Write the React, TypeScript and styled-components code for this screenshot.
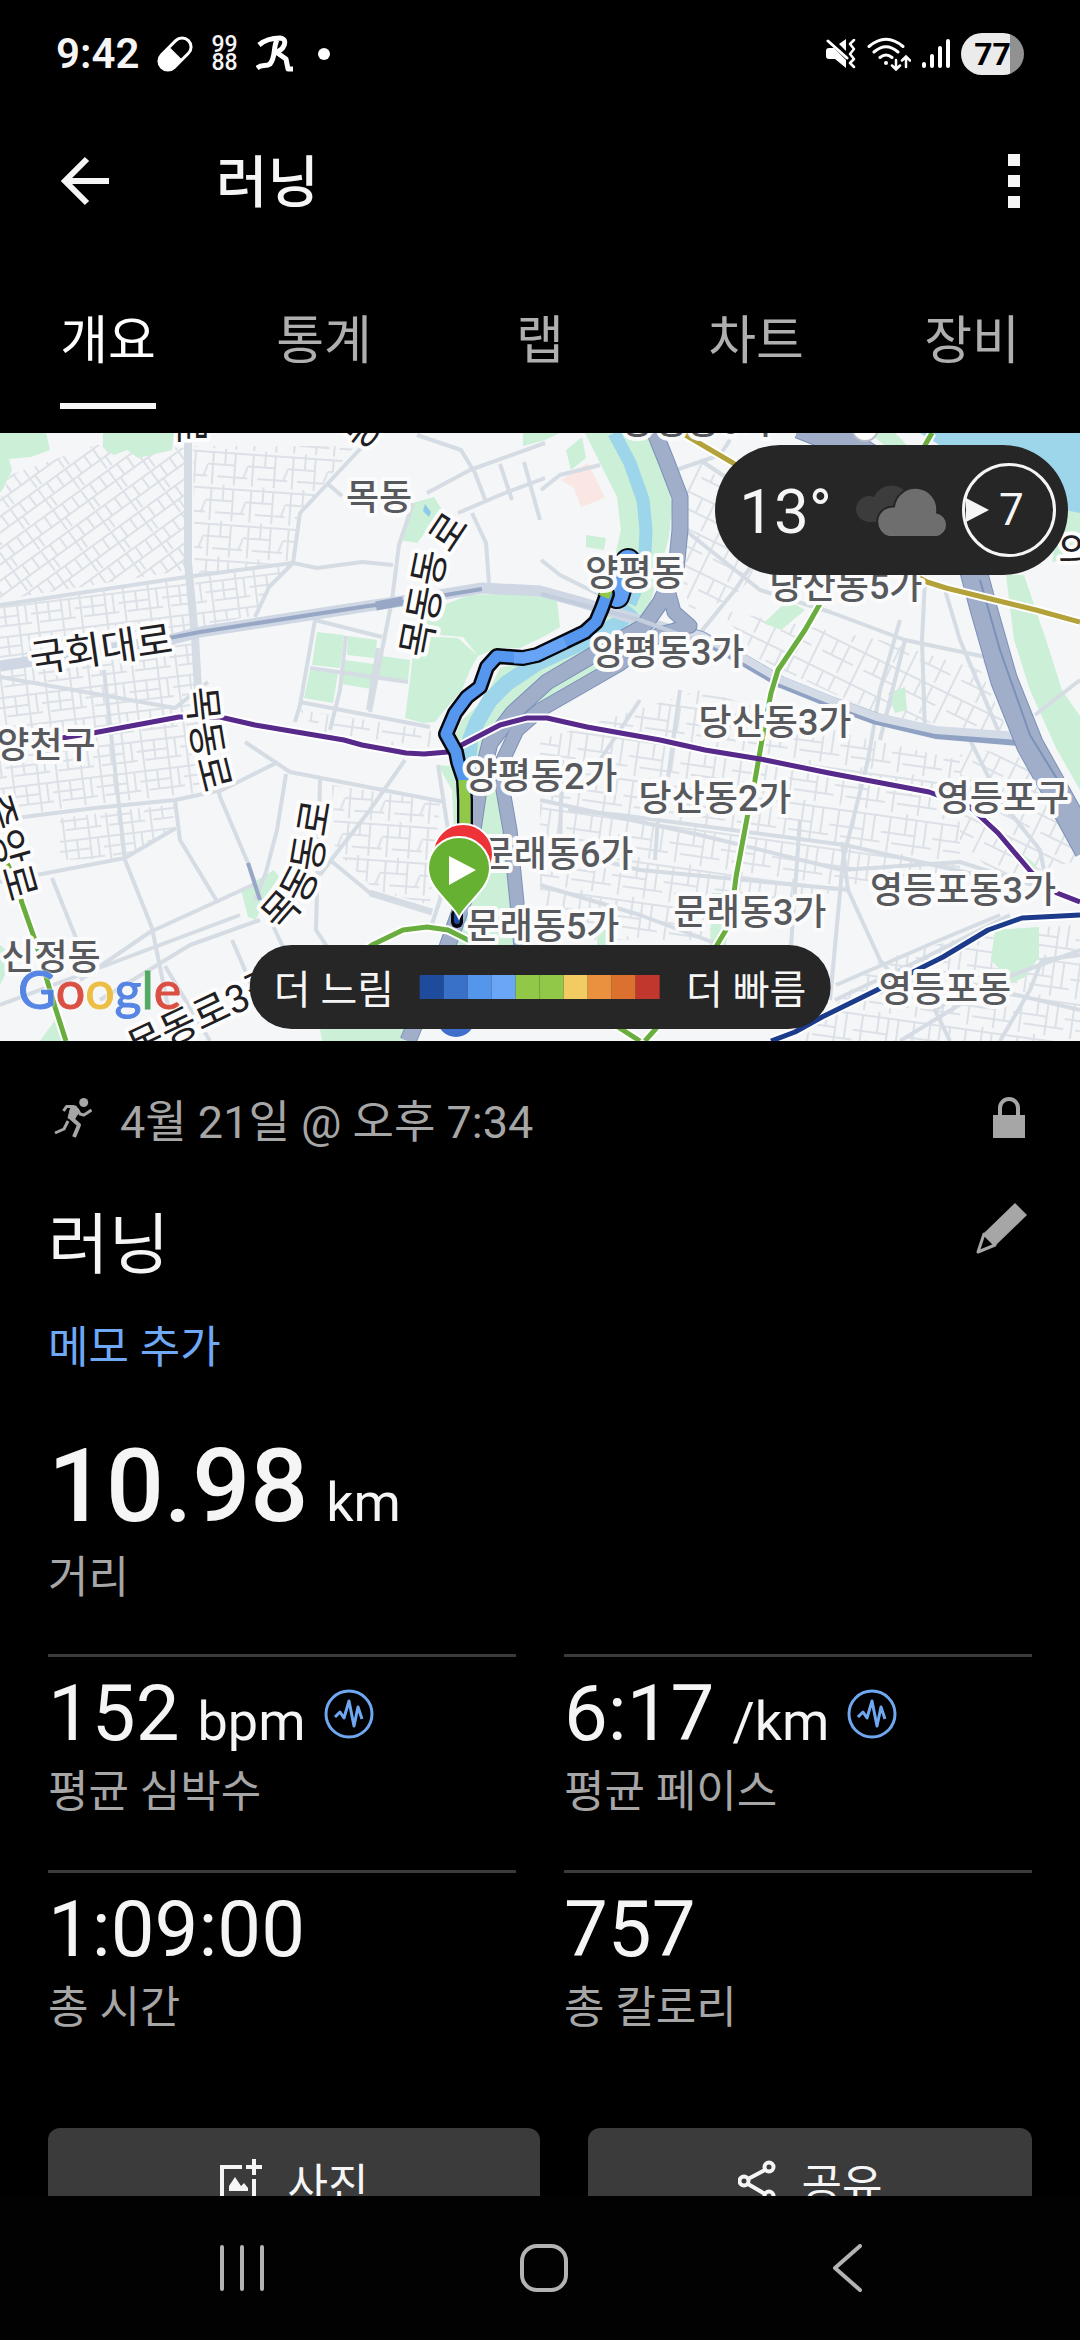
import { useState } from "react";
import styled, { createGlobalStyle } from "styled-components";

const tabs = ["개요", "통계", "랩", "차트", "장비"];

const paceColors = [
  "#1e4b9c",
  "#3971c9",
  "#5596ed",
  "#6ba6f6",
  "#91c847",
  "#91c847",
  "#f3cb63",
  "#ea9140",
  "#dc702e",
  "#c1362d",
];

const stats = [
  { value: "152", unit: "bpm", label: "평균 심박수", chart: true },
  { value: "6:17", unit: "/km", label: "평균 페이스", chart: true },
  { value: "1:09:00", unit: "", label: "총 시간", chart: false },
  { value: "757", unit: "", label: "총 칼로리", chart: false },
];

// neighbourhood names, [text, centre x, baseline y]
const places: [string, number, number][] = [
  ["양평동6가", 697, 434],
  ["목동", 379, 510],
  ["양평동", 635, 586],
  ["당산동5가", 846, 599],
  ["양평동3가", 668, 665],
  ["당산동3가", 775, 735],
  ["양천구", 46, 758],
  ["양평동2가", 541, 789],
  ["당산동2가", 715, 811],
  ["영등포구", 1003, 811],
  ["문래동6가", 557, 867],
  ["영등포동3가", 963, 903],
  ["문래동3가", 750, 925],
  ["문래동5가", 543, 939],
  ["신정동", 51, 970],
  ["영등포동", 945, 1002],
];

// road names follow the road
const roadNames = [
  { id: "r1", text: "국회대로", d: "M32 673 L176 652" },
  { id: "r2", text: "목동로", d: "M187 688 L191 726 Q195 760 208 804" },
  { id: "r3", text: "목동동로", d: "M428 659 L438 606 Q442 566 446 560 L474 518" },
  { id: "r4", text: "목동동로", d: "M279 932 Q312 900 320 868 L333 790" },
  { id: "r5", text: "중앙로", d: "M-20 800 L-4 850 L16 920" },
  { id: "r6", text: "목동로3길", d: "M136 1062 L300 984" },
  { id: "r7", text: "동로", d: "M177 372 L177 450" },
  { id: "r8", text: "동로", d: "M362 452 L400 402" },
  { id: "r9", text: "의", d: "M1058 565 L1100 565" },
];

const parks = [
  "M0 433H46L50 450L31 457L9 459L12 470L4 487L0 493Z",
  "M103 433L103 447L114 455L127 450L138 458L155 454L172 450L174 433Z",
  "M523 433L523 446L545 440L560 433Z",
  "M413 503L434 497L442 510L427 530L417 543L399 540L408 513Z",
  "M440 606L470 595L523 593L557 600L560 627L547 635L520 648L497 648L478 656L463 637L440 635L418 630Z",
  "M415 636L458 638L478 656L470 670L462 690L443 712L435 722L423 723L405 718L410 680Z",
  "M317 632L344 635L340 668L312 665Z",
  "M348 636L377 640L375 658L347 655Z",
  "M345 660L374 664L371 689L341 684Z",
  "M381 656L410 660L408 680L378 677Z",
  "M310 670L338 673L333 703L304 698Z",
  "M586 535L606 538L604 550L586 547Z",
  "M566 450L582 437L586 458L571 470Z",
  "M764 623L788 600L805 610L781 630Z",
  "M888 693L905 687L907 710L895 713Z",
  "M241 890L274 870L279 877L265 897L256 920L248 917Z",
  "M40 1041L55 1020L68 1041Z",
  "M0 945L6 950L5 975L0 985Z",
  "M320 1029H410V1041H322Z",
  "M995 930L1039 927L1039 957L1025 977L1012 983L991 960Z",
  "M712 893L733 893L726 945L710 945Z",
  "M598 930L606 930L610 945L597 945Z",
  "M1014 847L1036 865L1030 872L1018 862Z",
  // stream banks and the Han riverside
  "M585 433L650 433L667 473L672 507L669 537L660 570L650 603L637 625L600 640L606 600L617 547L621 530L617 497L605 473Z",
  "M610 628L560 650L500 668L484 700L462 720L452 742L464 800L478 800L505 725L560 690L625 660L634 640Z",
  "M438 765L452 790L455 850L450 945L520 945L516 870L508 800L500 770Z",
  "M1006 575L1024 575L1046 640L1062 690L1080 716L1080 790L1056 748L1030 690L1014 640Z",
  "M1062 505L1080 508L1080 556L1052 562Z",
  "M870 433L895 433L912 450L890 450Z",
];

const majorRoads = [
  "M188 433L188 563L195 637L198 690L220 797L248 863L262 903L275 930L290 962",
  "M0 605L186 577L293 563L317 568L362 562L393 565",
  "M362 447L331 480L300 513L293 563L269 587L255 617",
  "M417 435L461 450L475 473L486 502",
  "M427 493L470 470L545 443",
  "M458 513L500 495L545 478",
  "M500 464L512 500M524 462L540 520",
  "M472 513L486 543L489 583",
  "M413 503L399 545L392 600L380 660L370 712",
  "M328 484L342 496",
  "M315 620L300 705L295 722",
  "M315 620L382 637",
  "M346 636L340 690L330 730",
  "M378 648L368 710",
  "M310 668L408 682",
  "M300 702L430 727",
  "M0 677L175 708L208 682",
  "M0 820L95 808L175 800L222 790L278 762",
  "M245 742L290 772L445 802",
  "M104 670L115 770L125 860L152 928L175 1041",
  "M175 800L180 840L218 903",
  "M0 882L125 858L176 828",
  "M52 878L80 948",
  "M80 980L150 932L255 884",
  "M100 1000L190 945L260 920",
  "M232 940L258 1000",
  "M286 774L277 830L266 872L255 900",
  "M320 780L316 930L336 960",
  "M438 765L448 830L440 900L430 930",
  "M330 860L370 893L432 912",
  "M405 760L370 810L335 855L320 875",
  "M0 1005L120 960L240 915",
  "M165 966L210 1041",
  "M685 530L760 590L830 612L905 640L1000 660",
  "M700 633L735 590L755 560",
  "M700 460L760 500M676 470L720 455L730 440",
  "M925 580L922 640L925 733",
  "M900 620L880 690L868 760L843 860L830 1000",
  "M945 590L960 640L1000 735",
  "M540 800L700 835L842 870L960 862L1080 900",
  "M540 885L640 915L720 945",
  "M568 810L620 815L845 845L1000 880",
  "M562 760L560 850L640 870L850 890",
  "M842 842L848 890L880 960L905 990",
  "M836 985L940 940L1000 915",
  "M660 790L655 860M800 820L790 960",
  "M970 740L1000 800L1040 850L1050 900",
  "M905 640L880 740M985 660L1010 720",
  "M835 1000L920 960L990 925L1010 915",
  "M900 1041L1000 980L1080 950",
  "M950 1041L935 1010L975 985L1080 1010",
  "M1000 1041L1030 990L1042 960L1080 955",
  "M640 700L600 760M680 690L665 800",
  "M541 560L560 575L600 595M600 465L560 475L541 490",
  "M1035 715L1080 680",
];

// freeways: [path, width]
const freeways: [string, number][] = [
  ["M655 433L667 463L680 497L680 530L676 570L660 603L643 627L593 655L547 682L513 713L490 743L480 783L473 830L464 900L446 950L408 1041", 15],
  ["M668 590L674 612L690 626L660 634L620 664L580 687L540 710L517 730L503 760L503 790L510 830L513 863L518 913L522 960", 13],
  ["M800 425L850 445L905 480L965 540L984 610L1004 680L1030 745L1058 795L1088 850", 26],
];

const minorGrids = [
  { fill: "url(#gridA)", d: "M10 475L95 445L190 448L186 570L0 600V500Z" },
  { fill: "url(#gridB)", d: "M0 604L186 578L196 700L222 790L80 806L0 818Z" },
  { fill: "url(#gridC)", d: "M193 446L355 446L302 510L292 560L195 575Z" },
  { fill: "url(#gridB)", d: "M195 578L285 566L255 615L198 628Z" },
  { fill: "url(#gridB)", d: "M60 818L175 804L172 830L126 858L60 860Z" },
  { fill: "url(#gridC)", d: "M332 785L440 802L430 905L375 890L335 850Z" },
  { fill: "url(#gridD)", d: "M670 530L700 460L760 520L770 560L730 600L690 610Z" },
  { fill: "url(#gridE)", d: "M540 740L700 690L850 735L960 760L960 870L850 885L700 940L540 940Z" },
  { fill: "url(#gridD)", d: "M720 610L880 640L980 670L1010 735L880 715L760 660Z" },
  { fill: "url(#gridD)", d: "M960 745L1030 760L1080 860L1000 880L960 840Z" },
  { fill: "url(#gridE)", d: "M880 960L990 930L1080 925V1041H800Z" },
  { fill: "url(#gridE)", d: "M300 710L430 730L440 752L320 735Z" },
];

const subways = [
  { color: "#b3a13a", d: "M682 433L733 463L850 540L927 582L946 588L1036 610L1080 622" },
  { color: "#69ad3e", d: "M932 433L905 480L845 570L825 595L805 630L778 670L771 693L762 740L755 780L748 813L736 877L734 893L726 930L717 945L690 990L645 1041" },
  { color: "#69ad3e", d: "M3 855L14 877L22 903L36 943L55 1007L66 1041" },
  { color: "#69ad3e", d: "M350 960L372 945L403 930L427 927L448 930L478 945L560 990L640 1041" },
  { color: "#56298a", d: "M62 738L93 733L179 717L220 717L255 725L344 740L362 745L406 753L424 754L448 752L475 738L500 725L527 718L547 718L587 727L660 740L705 750L760 759L829 773L929 792L970 807L998 833L1032 873L1057 893L1080 902" },
  { color: "#1d3b8b", d: "M771 1041L795 1032L822 1017L877 990L943 957L988 930L1022 918L1080 915" },
];

const route =
  "M607 594L602 608L596 622L585 632L537 655L523 658L497 656L487 667L480 687L467 697L455 713L446 734L456 752L458 762L464 780L465 800L465 850";

const CityMap = () => (
  <MapSvg viewBox="0 433 1080 608" preserveAspectRatio="xMidYMid slice" role="img" aria-label="러닝 경로 지도">
    <defs>
      <pattern id="gridA" width="34" height="26" patternUnits="userSpaceOnUse" patternTransform="rotate(-36)">
        <path d="M0 2H34M0 15H34M4 2V15M15 2V26M26 2V15M21 15V28" />
      </pattern>
      <pattern id="gridB" width="44" height="30" patternUnits="userSpaceOnUse" patternTransform="rotate(-7)">
        <path d="M0 3H44M0 13H30M8 22H44M6 0V30M18 3V22M31 0V30M39 3V22" />
      </pattern>
      <pattern id="gridC" width="40" height="36" patternUnits="userSpaceOnUse" patternTransform="rotate(4)">
        <path d="M0 4H40M0 16H26M10 28H40M5 4V36M17 0V16M27 4V36M36 28L40 16" />
      </pattern>
      <pattern id="gridD" width="46" height="34" patternUnits="userSpaceOnUse" patternTransform="rotate(26)">
        <path d="M0 4H46M12 20H46M6 0V34M22 4V20M35 4V34" />
      </pattern>
      <pattern id="gridE" width="52" height="40" patternUnits="userSpaceOnUse" patternTransform="rotate(8)">
        <path d="M0 5H52M0 21H34M12 31H52M8 5V40M24 0V21M34 5V40M44 5V31" />
      </pattern>
    </defs>

    <rect y="433" width="1080" height="608" fill="#f5f6f7" />
    {minorGrids.map((g) => (
      <path key={g.d} d={g.d} fill={g.fill} />
    ))}
    <path d="M561 480L588 463L605 498L581 507L574 488Z" fill="#fae6e3" />
    {parks.map((d) => (
      <path key={d} d={d} fill="#ccefd7" />
    ))}

    <g fill="none" strokeLinejoin="round">
      <path d="M614 433L630 463L643 500L646 530L645 553L640 580L630 604" stroke="#9dd6ea" strokeWidth="13" />
      <path d="M632 608L618 624L587 640L537 663L507 683L490 700L477 722L470 740L468 765" stroke="#9dd6ea" strokeWidth="16" />
    </g>
    <path d="M920 433H1080V513L1050 507L980 470Z" fill="#9dd6ea" />
    <path d="M425 504L431 512L429 517L423 511Z" fill="#8ccbe8" />

    <g fill="none" stroke="#d5dce3" strokeWidth="4" strokeLinejoin="round">
      {majorRoads.map((d) => (
        <path key={d} d={d} />
      ))}
      <path d="M188 433L188 563L195 637L198 690" strokeWidth="8" />
      <path d="M370 893L432 912" strokeWidth="7" />
    </g>

    <g fill="none" strokeLinejoin="round">
      <path d="M0 666L169 640L200 632L368 606L403 601L482 588L540 591L580 602L671 630" stroke="#ced7e3" strokeWidth="11" />
      <path d="M169 638L200 632L368 606L403 602L482 589" stroke="#97a7c5" strokeWidth="4" />
      <path d="M376 606L403 601" stroke="#97a7c5" strokeWidth="9" />
      <path d="M671 628L702 637L747 662L781 682L833 703L877 719L936 733L1019 740" stroke="#8fa2c3" strokeWidth="12" />
      <path d="M671 627L702 636L747 660L781 680L833 701L877 717L936 730L1019 736" stroke="#d3dbe6" strokeWidth="8" />
      <path d="M248 863L260 900" stroke="#97a7c5" strokeWidth="4" />
      {freeways.map(([d, w]) => (
        <path key={d} d={d} stroke="#7b91b8" strokeWidth={w + 2} />
      ))}
      {freeways.map(([d, w]) => (
        <path key={d} d={d} stroke="#a1aeca" strokeWidth={w} />
      ))}
      <path d="M980 580L1000 650L1030 735L1070 800" stroke="#7b91b8" strokeWidth="2" />
      <path d="M640 570L626 594M541 594L640 620L700 642" stroke="#c3cddd" strokeWidth="4" />
    </g>
    <circle cx="865" cy="428" r="13" fill="#ffffff" stroke="#b8bfca" strokeWidth="2" />

    <g fill="none" strokeLinejoin="round">
      {subways.map((s) => (
        <path key={s.d} d={s.d} stroke="#ffffff" strokeWidth="9" />
      ))}
      {subways.map((s) => (
        <path key={s.d} d={s.d} stroke={s.color} strokeWidth="5" />
      ))}
    </g>

    <g fill="none" strokeLinejoin="round" strokeLinecap="round">
      <path d="M628 561L617 596" stroke="#05070c" strokeWidth="26" />
      <path d="M628 561L617 596" stroke="#5f9ef2" strokeWidth="22" />
      <path d={route} stroke="#05070c" strokeWidth="16" />
      <path d={route} stroke="#5596ee" strokeWidth="11" />
      <path d="M565 642L537 655L523 658L514 658" stroke="#67a4f5" strokeWidth="11" strokeLinecap="butt" />
      <path d="M609 585L604 597" stroke="#91c847" strokeWidth="11" strokeLinecap="butt" />
      <path d="M464 780L465 800L465 850" stroke="#91c847" strokeWidth="11" strokeLinecap="butt" />
      <path d="M457 915L457 922" stroke="#05070c" strokeWidth="12" />
      <path d="M457 915L457 921" stroke="#1e4b9c" strokeWidth="6" />
    </g>
    <circle cx="456" cy="1018" r="19" fill="#3f6fc8" />

    <g fill="#57595d" stroke="#fbfbfc" strokeWidth="8" strokeLinejoin="round" paintOrder="stroke" fontSize="36" fontWeight="500" textAnchor="middle">
      {places.map(([name, x, y]) => (
        <text key={name} x={x} y={y}>
          {name}
        </text>
      ))}
    </g>
    <g fill="#1f2023" stroke="#fdfdfd" strokeWidth="8" strokeLinejoin="round" paintOrder="stroke" fontSize="39">
      {roadNames.map((r) => (
        <g key={r.id}>
          <path id={r.id} d={r.d} fill="none" stroke="none" />
          <text>
            <textPath href={`#${r.id}`}>{r.text}</textPath>
          </text>
        </g>
      ))}
    </g>

    <path d="M462 904C456 885 433 876 433 854A29 29 0 0 1 493 854C493 876 468 885 462 904Z" fill="#ee3338" stroke="#ffffff" strokeWidth="2" />
    <path d="M459 918C452 902 428 890 428 868A31 31 0 0 1 490 868C490 890 466 902 459 918Z" fill="#66b132" stroke="#ffffff" strokeWidth="2" />
    <path d="M449 856L476 870L449 885Z" fill="#ffffff" />
  </MapSvg>
);

const PillIcon = () => (
  <svg width="36" height="36" viewBox="0 0 36 36" aria-hidden="true">
    <g transform="rotate(45 18 18)">
      <rect x="9" y="-1" width="18" height="38" rx="9" fill="none" stroke="#fff" strokeWidth="3" />
      <path d="M8 17H28V28A10 10 0 0 1 8 28Z" fill="#fff" />
    </g>
  </svg>
);

const RunnerLetterIcon = () => (
  <svg width="38" height="38" viewBox="0 0 38 38" fill="none" stroke="#fff" strokeWidth="5" strokeLinejoin="round" aria-hidden="true">
    <path d="M3 10C10 4 18 3 24 3C33 4 28 15 20 17L30 24L32 34L37 34" />
    <path d="M21 5C17 12 20 22 14 29C10 32 6 29 1 33" />
  </svg>
);

const MuteIcon = () => (
  <svg width="30" height="30" viewBox="0 0 30 30" aria-hidden="true">
    <path d="M0 12Q0 9 3 9H8L20 21V29L9 20H3Q0 20 0 17Z" fill="#fff" />
    <path d="M13 5L20 0V12Z" fill="#fff" />
    <path d="M2 2L21 19" stroke="#fff" strokeWidth="3" strokeLinecap="round" />
    <path d="M28 1L24 5L28 10L24 15L28 20L24 24L28 28" stroke="#fff" strokeWidth="2.5" fill="none" strokeLinejoin="round" strokeLinecap="round" />
  </svg>
);

const WifiIcon = () => (
  <svg width="44" height="34" viewBox="0 0 44 34" fill="none" stroke="#fff" strokeWidth="3" strokeLinecap="round" aria-hidden="true">
    <path d="M2 9.500Q19 -5 36 9.500M7 15Q19 4.500 31 15M13 20.500Q19 15.500 25 20.500" />
    <circle cx="19" cy="26" r="2" fill="#fff" stroke="none" />
    <path d="M29 23V32M25 28.500L29 32.500L33 28.500M39 30V20M35 23.500L39 19.500L43 23.500" strokeWidth="2.500" />
  </svg>
);

const SignalIcon = () => (
  <svg width="28" height="30" viewBox="0 0 28 30" stroke="#fff" strokeWidth="4" strokeLinecap="round" aria-hidden="true">
    <path d="M2 25V27M10 17V27M18 9V27M26 2V27" />
  </svg>
);

const CloudsIcon = () => (
  <svg width="94" height="54" viewBox="0 0 94 54" aria-hidden="true">
    <path d="M12 39A13 13 0 1 1 18 14A19 19 0 0 1 53 14L40 39Z" fill="#3c3c3c" />
    <path
      d="M33 54A15.500 15.500 0 0 1 38 23.500A21.500 21.500 0 0 1 81 29.500A12.500 12.500 0 0 1 81 54Z"
      fill="#6e6e6e"
      stroke="#262626"
      strokeWidth="2"
    />
  </svg>
);

const RunningIcon = () => (
  <svg width="38" height="40" viewBox="0 0 38 40" fill="none" stroke="#a6a6a6" strokeWidth="3" strokeLinejoin="round" aria-hidden="true">
    <circle cx="29.700" cy="4.500" r="4.500" fill="#a6a6a6" stroke="none" />
    <path d="M9.500 13L12.500 8.500H19L23.500 11.500L26 16L30 17L37.500 12" />
    <path d="M17 8H22L25 14L20 22L14 20Z" fill="#a6a6a6" strokeWidth="1" />
    <path d="M16 19L25 27L20 39" strokeWidth="4" />
    <path d="M14 23L10 31L1 35" strokeWidth="3" />
  </svg>
);

const LockIcon = () => (
  <svg width="34" height="42" viewBox="0 0 34 42" aria-hidden="true">
    <path d="M8 18V11A9 9 0 0 1 26 11V18" fill="none" stroke="#a6a6a6" strokeWidth="4" />
    <rect x="1" y="18" width="32" height="23" fill="#a6a6a6" />
  </svg>
);

const PencilIcon = () => (
  <svg width="52" height="52" viewBox="0 0 52 52" aria-hidden="true">
    <path d="M39 1L51 13L20 43L7 32Z" fill="#a6a6a6" />
    <path d="M8 32L2 50L19 43Z" fill="#000" stroke="#a6a6a6" strokeWidth="3" strokeLinejoin="round" />
  </svg>
);

const PulseIcon = () => (
  <svg width="50" height="50" viewBox="0 0 50 50" fill="none" stroke="#6fa8f0" aria-hidden="true">
    <circle cx="25" cy="25" r="23" strokeWidth="3" />
    <path d="M11 28L16 23L20 29L25 12L30 37L34 18L38 30" strokeWidth="3" strokeLinejoin="round" />
  </svg>
);

const PhotoIcon = () => (
  <svg width="42" height="46" viewBox="0 0 42 46" aria-hidden="true">
    <path d="M22 8H2V44H34V20" fill="none" stroke="#f5f5f5" strokeWidth="4" />
    <path d="M34 0V16M26 8H42" stroke="#f5f5f5" strokeWidth="4" />
    <path d="M9 32V27L15 18L21 27L24 24L28 29V32Z" fill="#f5f5f5" />
  </svg>
);

const ShareIcon = () => (
  <svg width="38" height="44" viewBox="0 0 38 44" fill="none" stroke="#f5f5f5" strokeWidth="4" aria-hidden="true">
    <circle cx="31" cy="7" r="4.500" />
    <circle cx="6" cy="21" r="4.500" />
    <circle cx="31" cy="36" r="4.500" />
    <path d="M27 10L10 19M10 24L27 34" />
  </svg>
);

const App = () => {
  const [active, setActive] = useState("개요");

  return (
    <>
      <GlobalStyle />
      <Screen>
        <StatusBar>
          <StatusGroup>
            <Clock>9:42</Clock>
            <PillIcon />
            <Badge9988>
              <span>99</span>
              <span>88</span>
            </Badge9988>
            <RunnerLetterIcon />
            <Dot />
          </StatusGroup>
          <StatusGroup $tight>
            <MuteIcon />
            <WifiIcon />
            <SignalIcon />
            <Battery>77</Battery>
          </StatusGroup>
        </StatusBar>

        <AppBar>
          <IconButton aria-label="뒤로">
            <svg width="50" height="50" viewBox="0 0 50 50" fill="none" stroke="#f5f5f5" strokeWidth="6">
              <path d="M27 3L5 25L27 47M5 25H49" />
            </svg>
          </IconButton>
          <AppTitle>러닝</AppTitle>
          <IconButton aria-label="더보기">
            <svg width="12" height="54" viewBox="0 0 12 54" fill="#f5f5f5">
              <path d="M0 0H12V12H0ZM0 21H12V33H0ZM0 42H12V54H0Z" />
            </svg>
          </IconButton>
        </AppBar>

        <Tabs role="tablist">
          {tabs.map((tab) => (
            <Tab key={tab} role="tab" aria-selected={tab === active} $active={tab === active} onClick={() => setActive(tab)}>
              <span>{tab}</span>
            </Tab>
          ))}
        </Tabs>

        <Content>
          <MapPanel>
            <CityMap />
            <Weather>
              <Temperature>13°</Temperature>
              <CloudsIcon />
              <Wind>
                <svg width="24" height="24" viewBox="0 0 24 24" aria-hidden="true">
                  <path d="M1 0L24 12L1 24Z" fill="#f5f5f5" />
                </svg>
                7
              </Wind>
            </Weather>
            <GoogleMark aria-label="Google">
              <Letter $color="#4e80e4">G</Letter>
              <Letter $color="#d9483b">o</Letter>
              <Letter $color="#edbc3c">o</Letter>
              <Letter $color="#4e80e4">g</Letter>
              <Letter $color="#4ba45c">l</Letter>
              <Letter $color="#d9483b">e</Letter>
            </GoogleMark>
            <Legend>
              더 느림
              <Scale>
                {paceColors.map((color, i) => (
                  <Swatch key={i} $color={color} />
                ))}
              </Scale>
              더 빠름
            </Legend>
          </MapPanel>

          <Details>
            <MetaRow>
              <RunningIcon />
              <time>4월 21일 @ 오후 7:34</time>
              <LockIcon />
            </MetaRow>
            <TitleRow>
              <h2>러닝</h2>
              <IconButton aria-label="이름 편집">
                <PencilIcon />
              </IconButton>
            </TitleRow>
            <MemoLink href="#memo">메모 추가</MemoLink>

            <Distance>
              10.98
              <Unit>km</Unit>
            </Distance>
            <Label>거리</Label>

            <StatGrid>
              {stats.map((s) => (
                <Stat key={s.label}>
                  <StatValue>
                    {s.value}
                    {s.unit && <Unit>{s.unit}</Unit>}
                    {s.chart && <PulseIcon />}
                  </StatValue>
                  <Label>{s.label}</Label>
                </Stat>
              ))}
            </StatGrid>

            <Actions>
              <ActionButton>
                <PhotoIcon />
                사진
              </ActionButton>
              <ActionButton>
                <ShareIcon />
                공유
              </ActionButton>
            </Actions>
          </Details>
        </Content>

        <NavBar>
          <IconButton aria-label="최근 앱">
            <svg width="44" height="48" viewBox="0 0 44 48" stroke="#b3b3b3" strokeWidth="4" strokeLinecap="round">
              <path d="M2 3V45M22 3V45M42 3V45" />
            </svg>
          </IconButton>
          <IconButton aria-label="홈">
            <svg width="48" height="48" viewBox="0 0 48 48" fill="none" stroke="#b3b3b3" strokeWidth="4">
              <rect x="2" y="2" width="44" height="44" rx="15" />
            </svg>
          </IconButton>
          <IconButton aria-label="이전">
            <svg width="30" height="48" viewBox="0 0 30 48" fill="none" stroke="#b3b3b3" strokeWidth="4" strokeLinecap="round" strokeLinejoin="round">
              <path d="M28 2L3 24L28 46" />
            </svg>
          </IconButton>
        </NavBar>
      </Screen>
    </>
  );
};

export default App;

const GlobalStyle = createGlobalStyle`
  * {
    box-sizing: border-box;
  }

  body {
    margin: 0;
    background: #000;
    color: #f5f5f5;
    font-family: Roboto, "Noto Sans CJK KR", sans-serif;
  }

  button {
    padding: 0;
    border: none;
    background: none;
    color: inherit;
    font: inherit;
    cursor: pointer;
  }

  svg {
    display: block;
    flex-shrink: 0;
  }
`;

const Screen = styled.div`
  display: flex;
  flex-direction: column;
  height: 100vh;
`;

const StatusBar = styled.div`
  display: flex;
  justify-content: space-between;
  align-items: center;
  height: 108px;
  padding: 0 56px;
`;

const StatusGroup = styled.div<{ $tight?: boolean }>`
  display: flex;
  align-items: center;
  gap: ${(props) => (props.$tight ? "11px" : "18px")};
`;

const Clock = styled.span`
  font-size: 42px;
  font-weight: 600;
  line-height: 48px;
`;

const Badge9988 = styled.span`
  display: flex;
  flex-direction: column;
  font-size: 23px;
  font-weight: 500;
  line-height: 18px;
`;

const Dot = styled.span`
  width: 12px;
  height: 12px;
  margin-left: 6px;
  border-radius: 50%;
  background: #fff;
`;

const Battery = styled.span`
  width: 63px;
  height: 42px;
  border-radius: 21px;
  background: linear-gradient(to right, #ebebeb 77%, #919191 77%);
  color: #000;
  font-size: 32px;
  font-weight: 700;
  line-height: 42px;
  text-align: center;
`;

const IconButton = styled.button`
  display: flex;
  align-items: center;
  justify-content: center;
`;

const AppBar = styled.header`
  display: flex;
  align-items: center;
  height: 146px;
  padding: 0 60px;
`;

const AppTitle = styled.h1`
  flex: 1;
  margin: 0 0 0 106px;
  padding-top: 4px;
  font-size: 56px;
  font-weight: 500;
  line-height: 64px;
`;

const Tabs = styled.nav`
  display: grid;
  grid-template-columns: repeat(5, 1fr);
  padding-bottom: 24px;
`;

const Tab = styled.button<{ $active: boolean }>`
  display: flex;
  justify-content: center;
  padding-top: 56px;
  color: ${(props) => (props.$active ? "#ffffff" : "#afafaf")};
  font-size: 52px;
  line-height: 64px;

  span {
    padding-bottom: 29px;
    border-bottom: 6px solid ${(props) => (props.$active ? "#f5f5f5" : "transparent")};
  }
`;

const Content = styled.main`
  flex: 1;
  min-height: 0;
  overflow: hidden;
`;

const MapPanel = styled.section`
  position: relative;
  height: 608px;
  overflow: hidden;
`;

const MapSvg = styled.svg`
  width: 100%;
  height: 100%;

  pattern path {
    fill: none;
    stroke: #dce1e7;
    stroke-width: 2;
  }
`;

const Weather = styled.div`
  position: absolute;
  top: 12px;
  right: 12px;
  display: flex;
  align-items: center;
  height: 130px;
  padding: 0 12px 0 24px;
  border-radius: 65px;
  background: #262626;
`;

const Temperature = styled.span`
  margin-right: 24px;
  padding-top: 4px;
  font-size: 62px;
  line-height: 72px;
`;

const Wind = styled.span`
  display: flex;
  align-items: center;
  gap: 10px;
  width: 94px;
  height: 94px;
  margin-left: 12px;
  border: 3px solid #f5f5f5;
  border-radius: 50%;
  font-size: 44px;
`;

const GoogleMark = styled.div`
  position: absolute;
  bottom: 16px;
  left: 18px;
  font-family: Lato, sans-serif;
  font-size: 52px;
  line-height: 72px;
  -webkit-text-stroke: 1px;
  opacity: 0.95;
`;

const Letter = styled.span<{ $color: string }>`
  color: ${(props) => props.$color};
  text-shadow: 0 0 3px #fff, 0 0 3px #fff;
`;

const Legend = styled.div`
  position: absolute;
  bottom: 12px;
  left: 50%;
  display: flex;
  align-items: center;
  gap: 26px;
  height: 84px;
  padding: 0 24px;
  border-radius: 42px;
  background: #262626;
  font-size: 40px;
  white-space: nowrap;
  transform: translateX(-50%);
`;

const Scale = styled.div`
  display: flex;
`;

const Swatch = styled.span<{ $color: string }>`
  width: 24px;
  height: 24px;
  background: ${(props) => props.$color};
`;

const Details = styled.section`
  padding: 47px 48px 0;
`;

const MetaRow = styled.div`
  display: flex;
  align-items: center;
  gap: 28px;
  height: 60px;
  padding: 0 6px;
  color: #a6a6a6;
  font-size: 45px;

  time {
    flex: 1;
  }
`;

const TitleRow = styled.div`
  display: flex;
  justify-content: space-between;
  align-items: flex-start;
  margin-top: 54px;
  padding-right: 4px;

  h2 {
    margin: 0;
    padding-top: 4px;
    font-size: 66px;
    font-weight: 400;
    line-height: 80px;
  }
`;

const MemoLink = styled.a`
  display: block;
  margin-top: 32px;
  color: #6fa8f5;
  font-size: 44px;
  line-height: 60px;
  text-decoration: none;
`;

const Distance = styled.div`
  display: flex;
  align-items: baseline;
  gap: 18px;
  margin-top: 52px;
  font-size: 102px;
  font-weight: 500;
  line-height: 112px;
`;

const Unit = styled.span`
  font-size: 54px;
  font-weight: 400;
  line-height: 60px;
`;

const Label = styled.div`
  color: #a6a6a6;
  font-size: 44px;
  line-height: 60px;

  ${Distance} + & {
    margin-top: 6px;
  }
`;

const StatGrid = styled.div`
  display: grid;
  grid-template-columns: 1fr 1fr;
  column-gap: 48px;
  margin-top: 46px;
`;

const Stat = styled.div`
  padding: 9px 0 48px;
  border-top: 3px solid #3b3b3b;
`;

const StatValue = styled.div`
  display: flex;
  align-items: baseline;
  gap: 18px;
  font-size: 78px;
  line-height: 96px;

  svg {
    align-self: center;
  }
`;

const Actions = styled.div`
  display: grid;
  grid-template-columns: 41fr 37fr;
  gap: 48px;
  margin-top: 42px;
`;

const ActionButton = styled.button`
  display: flex;
  align-items: center;
  justify-content: center;
  gap: 26px;
  height: 108px;
  border-radius: 12px;
  background: #3b3b3b;
  font-size: 44px;
`;

const NavBar = styled.nav`
  display: grid;
  grid-template-columns: repeat(3, 1fr);
  height: 144px;
  padding: 0 82px 0 91px;
  background: #020202;
`;
